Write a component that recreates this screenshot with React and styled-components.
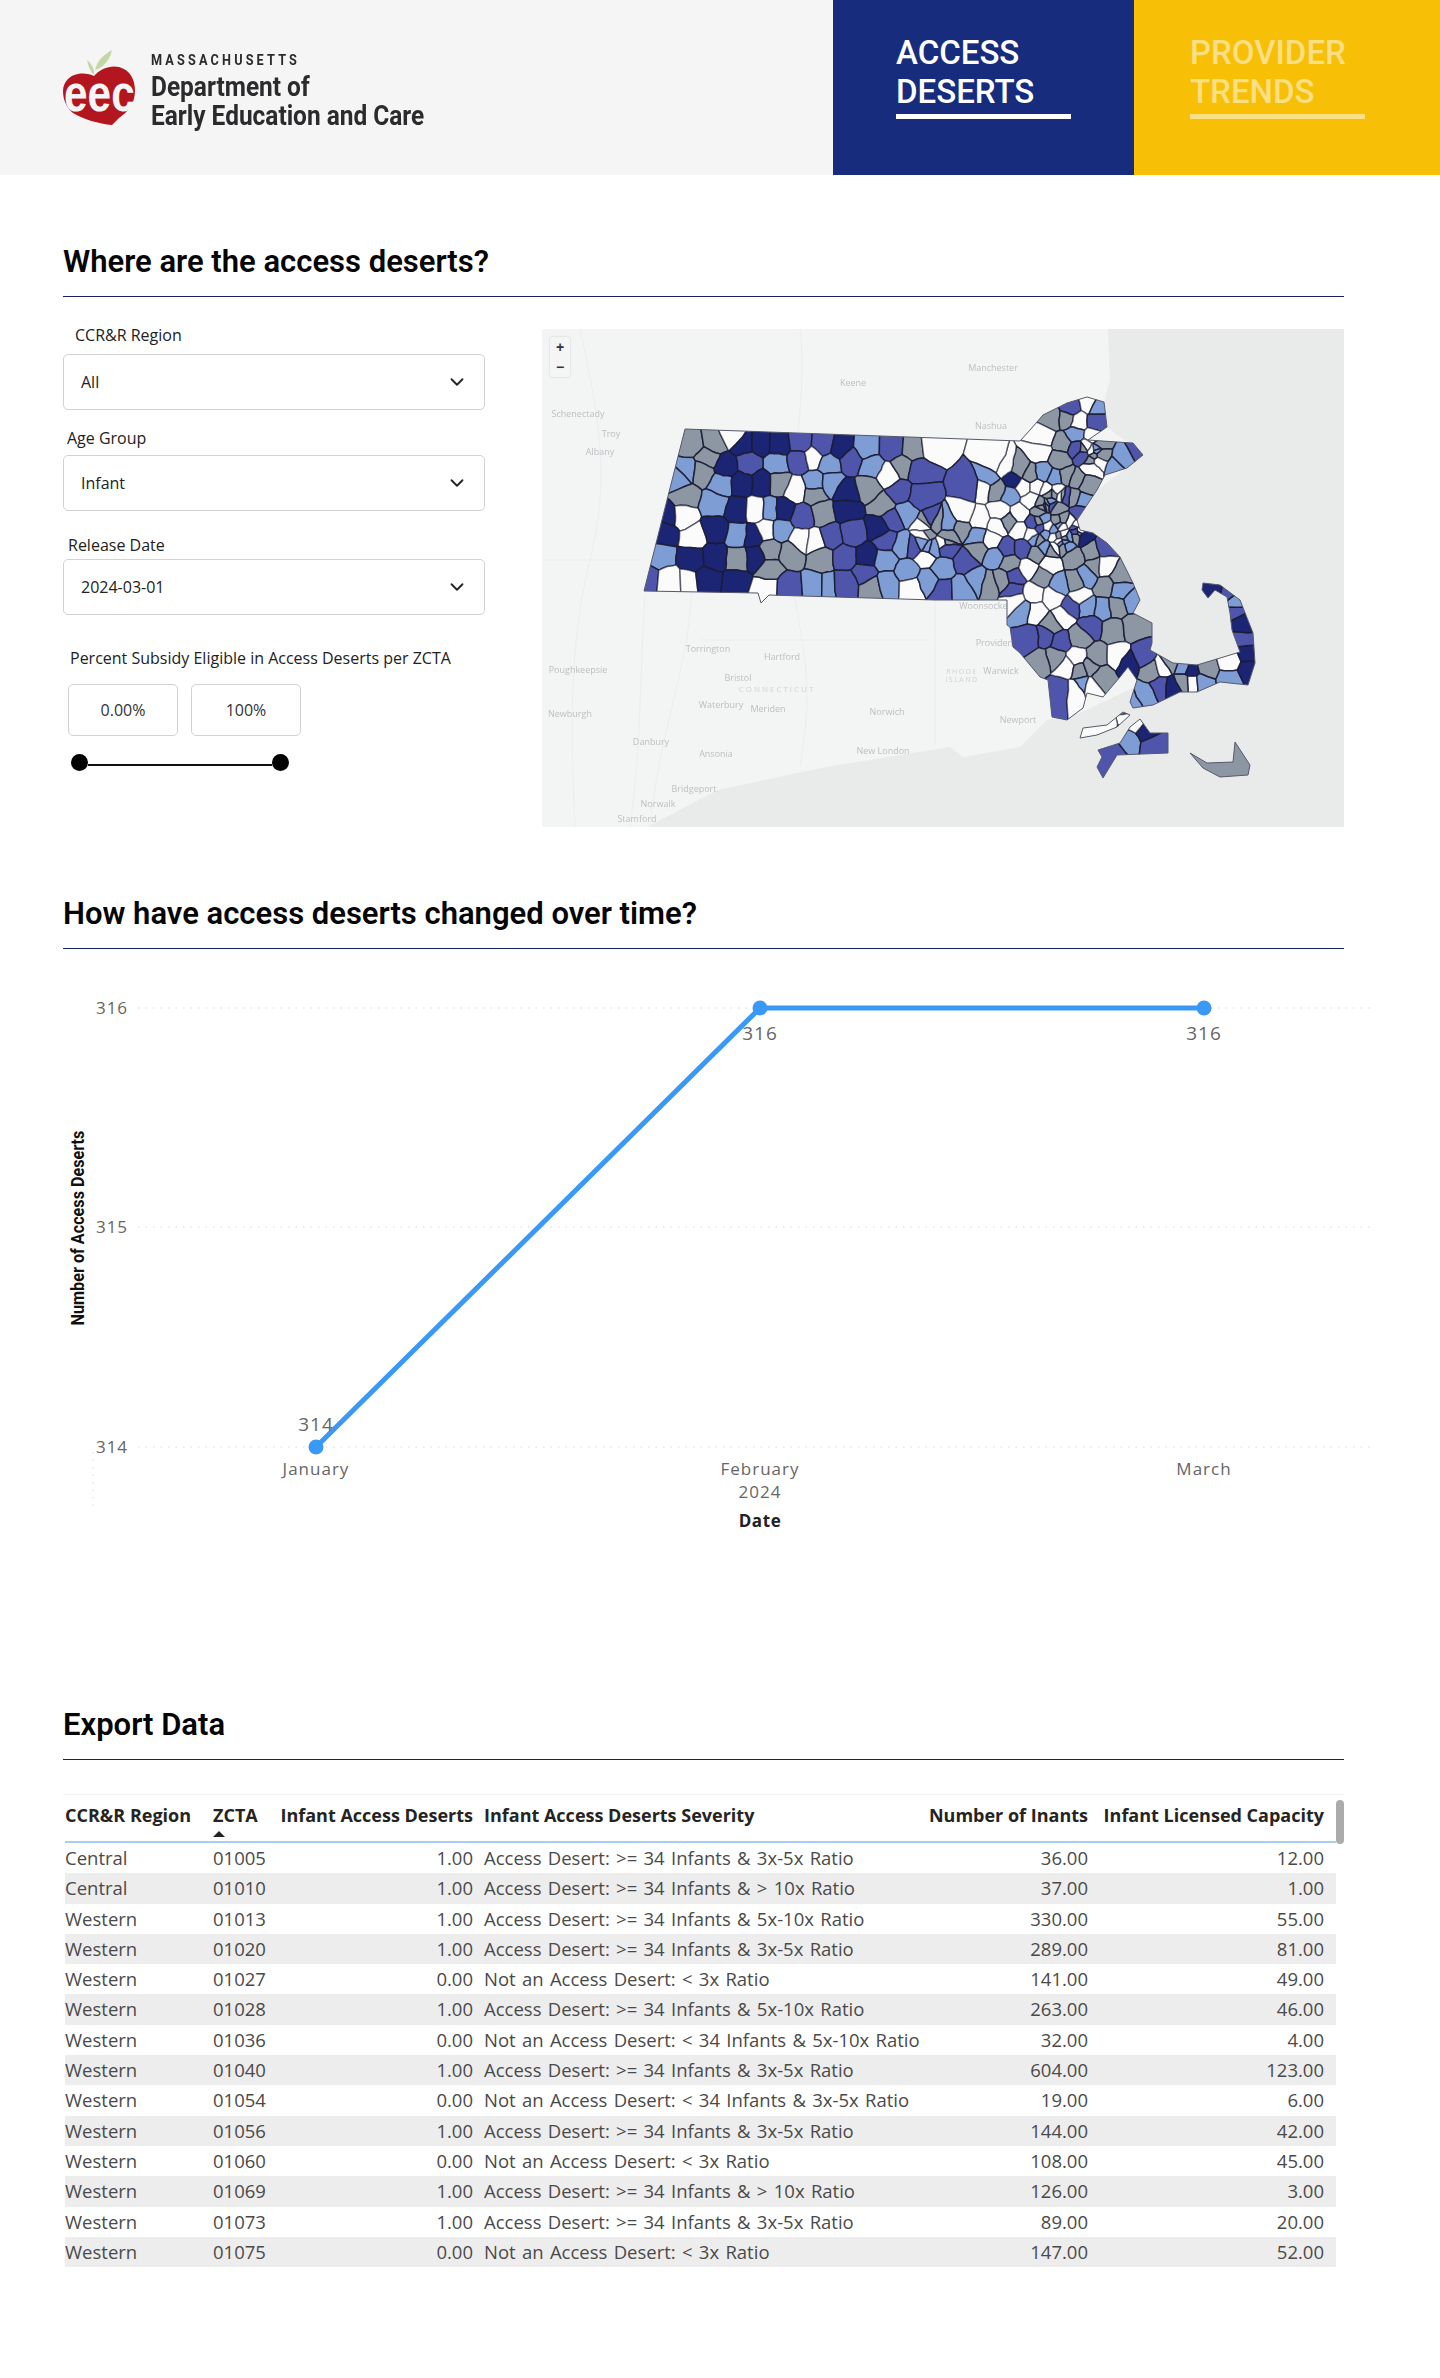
import React from "react";
import styled, { createGlobalStyle } from "styled-components";
import { ChevronDown } from "lucide-react";

const Global = createGlobalStyle`
  html, body { margin: 0; padding: 0; background: #fff; }
  * { box-sizing: border-box; }
`;

const Page = styled.div`
  width: 1440px;
  min-height: 2378px;
  font-family: "Open Sans", sans-serif;
  color: #222;
  overflow: hidden;
`;

const Header = styled.header`
  display: flex;
  height: 175px;
  background: #f5f5f5;
`;
const Brand = styled.div`
  flex: 1;
  display: flex;
  align-items: flex-start;
  padding: 49px 0 0 63px;
  gap: 16px;
`;
const BrandText = styled.div`
  display: flex;
  flex-direction: column;
  padding-top: 4px;
  color: #2b2b2d;
  transform: scaleX(0.905);
  transform-origin: left center;
`;
const BrandState = styled.div`
  font: 700 14px/14px "Roboto", sans-serif;
  letter-spacing: 3.5px;
  margin-bottom: 6px;
`;
const BrandName = styled.div`
  font: 700 27px/29px "Roboto", sans-serif;
  white-space: nowrap;
`;
const Tab = styled.div`
  width: ${(p) => p.$w}px;
  background: ${(p) => p.$bg};
  padding: 33px 0 0 ${(p) => p.$pad}px;
  color: ${(p) => p.$fg};
`;
const TabLabel = styled.div`
  width: 175px;
  font: 500 33px/39px "Roboto", sans-serif;
  padding-bottom: 3px;
  border-bottom: 5px solid currentColor;
`;

const Content = styled.main`
  padding: 0 96px 0 63px;
`;
const Heading = styled.h2`
  margin: ${(p) => p.$top}px 0 0;
  padding-bottom: 16px;
  font: 600 31px/37px "Roboto", sans-serif;
  color: #050505;
  border-bottom: 1px solid #15225f;
`;
const Row = styled.div`
  display: flex;
  align-items: flex-start;
  gap: 57px;
  padding-top: 27px;
`;
const Filters = styled.div`
  width: 422px;
  flex: none;
  display: flex;
  flex-direction: column;
`;
const Label = styled.label`
  font-size: 16px;
  line-height: 22px;
  color: #222;
  margin: ${(p) => p.$top || 0}px 0 ${(p) => p.$gap}px ${(p) => p.$indent}px;
`;
const Select = styled.div`
  height: 56px;
  display: flex;
  align-items: center;
  justify-content: space-between;
  padding: 0 16px 0 17px;
  border: 1px solid #d2d2d2;
  border-radius: 5px;
  font-size: 16px;
  color: #222;
`;
const RangeInputs = styled.div`
  display: flex;
  gap: 13px;
  margin-left: 5px;
`;
const RangeInput = styled.div`
  width: 110px;
  height: 52px;
  display: flex;
  align-items: center;
  justify-content: center;
  border: 1px solid #d2d2d2;
  border-radius: 5px;
  font-size: 16px;
  color: #333;
`;
const Slider = styled.div`
  display: flex;
  align-items: center;
  width: 218px;
  height: 17px;
  margin: 18px 0 0 8px;
`;
const Knob = styled.span`
  width: 17px;
  height: 17px;
  border-radius: 50%;
  background: #000;
  flex: none;
`;
const Track = styled.span`
  flex: 1;
  height: 2px;
  margin-top: 4px;
  background: #111;
`;

const MapFrame = styled.div`
  position: relative;
  width: 802px;
  height: 498px;
  margin-top: 5px;
  background: #e9ebeb;
  overflow: hidden;
`;
const MapSvg = styled.svg`
  display: block;
  filter: blur(0.4px);
`;
const ZoomBox = styled.div`
  position: absolute;
  left: 8px;
  top: 8px;
  width: 20px;
  height: 40px;
  background: #f5f5f5;
  border-radius: 2px;
  box-shadow: 0 0 2px rgba(0, 0, 0, 0.2);
  display: flex;
  flex-direction: column;
  font: 700 14px/20px "Liberation Sans", sans-serif;
  color: #333;
  text-align: center;
`;
const ChartSvg = styled.svg`
  display: block;
`;

const TableWrap = styled.div`
  display: flex;
  margin: 34px 0 0;
  border-top: 1px solid #f3f3f3;
  width: 1281px;
`;
const Table = styled.div`
  width: 1273px;
  padding-left: 2px;
`;
const Thumb = styled.div`
  width: 8px;
  height: 44px;
  margin-top: 5px;
  border-radius: 4px;
  background: #ababab;
`;
const grid = "142px 64px 206px 443px 172px 244px";
const HeadRow = styled.div`
  display: grid;
  grid-template-columns: ${grid};
  height: 48px;
  border-bottom: 2px solid #a9cdf2;
`;
const HeadCell = styled.div`
  position: relative;
  font: 700 18px/40px "Open Sans", sans-serif;
  color: #252423;
  white-space: nowrap;
  text-align: ${(p) => (p.$right ? "right" : "left")};
  padding: ${(p) => p.$pad};
  ${(p) =>
    p.$sorted &&
    `&::after {
      content: "";
      position: absolute;
      left: 6px;
      top: 36px;
      border-left: 6px solid transparent;
      border-right: 6px solid transparent;
      border-bottom: 6px solid #252423;
    }`}
`;
const BodyRow = styled.div`
  display: grid;
  grid-template-columns: ${grid};
  height: 30.3px;
  background: ${(p) => (p.$alt ? "#eeedee" : "#fff")};
`;
const Cell = styled.div`
  font: 400 18.5px/30px "Open Sans", sans-serif;
  word-spacing: 1.5px;
  color: #4a4a4a;
  white-space: nowrap;
  text-align: ${(p) => (p.$right ? "right" : "left")};
  padding: ${(p) => p.$pad};
`;

/* ---------- map drawing ---------- */
const z4 = `425,370,g 490,365,g 540,345,w 570,370,n 620,370,n 670,375,n 730,370,m 790,380,m 840,385,n 915,385,l 985,385,m 1045,390,g 1095,380,w
410,450,l 470,415,g 455,455,g 520,440,n 585,430,m 665,430,l 725,420,m 765,410,w 810,430,l 870,420,m 930,440,l 975,465,w 1015,440,g 1060,450,m
385,480,l 405,530,g 510,490,l 565,490,n 620,490,n 670,490,g 715,510,w 770,490,l 770,520,g 815,490,l 860,520,n 920,505,g 1005,515,m 1065,530,m
355,590,n 400,590,w 490,550,l 555,570,n 605,570,w 645,570,l 680,570,n 735,590,m 790,580,g 860,570,n 960,555,g 1025,580,l 985,600,m 1085,610,g
350,640,n 430,650,w 490,630,n 555,645,l 595,650,n 635,630,w 675,630,l 730,660,w 770,665,w 815,650,m 875,640,m 950,625,n 970,660,m 1015,675,l 1050,680,m 1080,640,g
340,710,l 425,715,n 490,710,n 555,715,g 600,710,n 645,690,g 700,700,g 790,715,g 855,710,m 915,710,n 965,720,l 1030,755,l 1080,710,w
305,780,m 360,780,w 410,790,w 470,780,n 550,790,n 640,800,w 645,750,g 690,800,m 770,800,l 810,800,l 855,790,m 910,760,m 930,800,g 970,790,l 1040,800,w 1085,780,l`;
const z5 = `450,85,m 510,70,w 530,80,l 400,115,g 440,115,g 475,125,w 530,125,m 465,165,l 520,170,w 370,170,w 430,190,g 540,190,g 470,205,m 490,225,m 360,215,w 420,240,g 540,225,g 515,260,w 610,235,l 650,215,m 590,260,l
280,300,n 300,270,g 250,260,w 225,250,w 205,295,l 190,325,w 150,320,m 230,330,g 270,345,l 310,320,w 350,320,w 380,330,w 370,280,l 405,295,l 330,285,g 440,290,g 470,300,g 500,315,g 425,345,g 460,350,g 490,360,l 395,375,m
240,395,w 300,400,w 335,360,w 235,440,w 265,425,g 300,450,w 215,480,w 175,420,w 170,470,l 130,405,w 125,445,g 85,430,l 85,470,g 260,505,m 175,510,g 225,530,l 270,550,g 310,505,m 140,545,m 65,565,l 70,630,m 125,625,l 170,600,l 210,610,g 245,600,g 285,590,m 280,630,m
325,565,w 365,590,g 390,550,w 405,500,w 350,520,g 440,495,l 460,530,g 515,510,g 550,500,m 490,470,n 530,560,g 550,560,w 600,590,g 500,590,l 555,620,g 600,630,l 640,665,l 465,605,g 420,615,l 500,680,l 455,680,m 550,685,l 590,680,g
340,640,w 400,650,w 345,695,w 430,710,w 310,690,l 285,660,w 395,735,g 480,650,w 510,740,m 480,770,g 580,750,g 640,740,g 330,775,m 375,770,m 420,785,m 405,830,g 360,840,g 530,830,g 470,835,w 595,830,w 420,930,m 440,860,w 470,930,w 480,870,g 510,860,g 545,890,g 490,915,l 510,920,w
625,850,n 670,830,m 695,870,g 730,860,w 670,945,l 725,920,m 640,960,l 760,920,n 790,860,l 745,850,g 815,905,w 790,905,g 845,905,l 815,870,n 860,865,g 930,845,w 930,895,l 985,870,n 985,820,n 980,775,m 975,730,n 950,690,m 950,675,l 880,630,n 930,640,m
580,1120,m 625,1080,l 675,1050,n 650,1030,w 700,1095,m 900,1165,g 540,1055,w`;
const parse = (s, f) =>
  s.split(/\s+/).filter(Boolean).map((t) => {
    const [x, y, c] = t.split(",");
    return f(+x, +y, c);
  });

function rng(seed) {
  let s = seed;
  return () => {
    s = (s * 1664525 + 1013904223) % 4294967296;
    return s / 4294967296;
  };
}
const hash = (k) => {
  let h = 2166136261;
  for (let i = 0; i < k.length; i++) h = Math.imul(h ^ k.charCodeAt(i), 16777619);
  return ((h >>> 0) % 1000) / 1000 - 0.5;
};
function clip(poly, a, b) {
  const mx = (a[0] + b[0]) / 2, my = (a[1] + b[1]) / 2, nx = b[0] - a[0], ny = b[1] - a[1];
  const d = (p) => (p[0] - mx) * nx + (p[1] - my) * ny;
  const out = [];
  for (let i = 0; i < poly.length; i++) {
    const p = poly[i], q = poly[(i + 1) % poly.length];
    const dp = d(p), dq = d(q);
    if (dp <= 0) out.push(p);
    if (dp < 0 !== dq < 0 && dp !== dq) {
      const t = dp / (dp - dq);
      out.push([p[0] + (q[0] - p[0]) * t, p[1] + (q[1] - p[1]) * t]);
    }
  }
  return out;
}
function jag(a, b, depth) {
  const len = Math.hypot(a[0] - b[0], a[1] - b[1]);
  if (depth === 0 || len < 6) return [];
  const ka = `${a[0].toFixed(1)},${a[1].toFixed(1)}`, kb = `${b[0].toFixed(1)},${b[1].toFixed(1)}`;
  const forward = ka < kb;
  const n = hash(forward ? ka + kb : kb + ka) * len * 0.12 * (forward ? 1 : -1);
  const m = [(a[0] + b[0]) / 2 - ((b[1] - a[1]) / len) * n, (a[1] + b[1]) / 2 + ((b[0] - a[0]) / len) * n];
  return [...jag(a, m, depth - 1), m, ...jag(m, b, depth - 1)];
}
const FILL = { n: "#1b2573", m: "#4f55ab", l: "#7f9dd5", g: "#8d96a3", w: "#fbfbfb" };

function buildCells() {
  const seeds = [
    ...parse(z4, (x, y, c) => [540 + x / 2.8, 320 + y / 3, c]),
    ...parse(z5, (x, y, c) => [920 + x / 3, 380 + y / 3, c]),
  ];
  const r = rng(11);
  const cluster = (cx, cy, sd, n, palette) => {
    for (let i = 0; i < n; i++) {
      const a = r() * 6.283, d = Math.sqrt(r()) * sd;
      seeds.push([cx + Math.cos(a) * d, cy + Math.sin(a) * d, palette[Math.floor(r() * palette.length)]]);
    }
  };
  cluster(1057, 520, 30, 46, "gggllwwm");
  cluster(933, 537, 16, 10, "gglwm");
  cluster(1090, 450, 16, 8, "gglw");
  const box = [[620, 380], [1280, 380], [1280, 790], [620, 790]];
  return seeds.map((s, i) => {
    let poly = box;
    for (let j = 0; j < seeds.length && poly.length; j++) if (j !== i) poly = clip(poly, s, seeds[j]);
    const pts = [];
    poly.forEach((p, k) => {
      const q = poly[(k + 1) % poly.length];
      pts.push(p, ...jag(p, q, 2));
    });
    return { d: "M" + pts.map((p) => `${p[0].toFixed(1)} ${p[1].toFixed(1)}`).join("L") + "Z", fill: FILL[s[2]] };
  });
}
const poly = (a) => "M" + a.map((p) => p.join(" ")).join("L") + "Z";
const MAINLAND = [[685,429],[1020,441],[1030,430],[1043,415],[1067,403],[1087,397],[1104,402],[1107,427],[1088,440],[1117,442],[1133,443],[1143,455],[1127,468],[1105,475],[1097,490],[1087,505],[1077,520],[1080,530],[1093,533],[1107,543],[1120,557],[1133,583],[1140,600],[1133,613],[1152,623],[1152,643],[1150,650],[1173,663],[1197,665],[1240,652],[1232,630],[1230,613],[1227,597],[1215,590],[1208,598],[1202,590],[1203,583],[1220,585],[1240,600],[1253,633],[1255,663],[1248,685],[1220,682],[1197,692],[1180,692],[1153,705],[1133,708],[1130,702],[1137,680],[1128,667],[1120,677],[1103,697],[1087,693],[1083,708],[1067,720],[1052,717],[1048,680],[1040,677],[1020,653],[1013,647],[1010,627],[1007,625],[1007,600],[935,600],[769,595],[761,603],[758,593],[644,591]];
const VINEYARD = [[1098,750],[1120,743],[1130,727],[1140,719],[1150,733],[1168,733],[1168,753],[1117,755],[1103,778],[1097,767],[1102,757]];
const NANTUCKET = [[1190,753],[1207,763],[1233,762],[1235,742],[1250,765],[1248,775],[1220,777],[1203,768]];
const ELIZABETH = [[1080,738],[1083,728],[1107,725],[1123,712],[1130,715],[1117,727],[1097,735]];
const STATE = [MAINLAND, VINEYARD, NANTUCKET, ELIZABETH].map(poly).join("");
const LAND = poly([[542,827],[647,827],[718,790],[826,767],[950,747],[963,757],[1020,747],[1047,720],[1080,713],[1150,680],[1150,650],[1133,613],[1107,543],[1080,530],[1077,520],[1097,490],[1127,468],[1143,455],[1107,427],[1104,402],[1110,380],[1108,329],[542,329]]);
const PLACES = [
  ["Manchester",993,371],["Keene",853,386],["Schenectady",578,417],["Troy",611,437],["Albany",600,455],["Nashua",991,429],["Torrington",708,652],["Hartford",782,660],["Bristol",738,681],["Poughkeepsie",578,673],["Waterbury",721,708],["Meriden",768,712],["Norwich",887,715],["New London",883,754],["Danbury",651,745],["Ansonia",716,757],["Bridgeport",694,792],["Norwalk",658,807],["Stamford",637,822],["Newburgh",570,717],["Providence",999,646],["Warwick",1001,674],["Woonsocket",985,609],["Newport",1018,723],
];
const CELLS = buildCells();

function MapDrawing() {
  return (
    <MapSvg width="802" height="498" viewBox="542 329 802 498">
      <defs>
        <clipPath id="ma"><path d={STATE} /></clipPath>
      </defs>
      <path d={LAND} fill="#f3f4f4" />
      <g fill="none" stroke="#ecedee" strokeWidth="1">
        <path d="M580 329C600 420 610 480 590 560S570 720 575 827" />
        <path d="M690 560C700 640 660 720 650 827" />
        <path d="M800 329C810 400 780 520 795 600S810 700 800 767" />
        <path d="M935 600V745" />
        <path d="M645 595C640 680 640 760 630 827" />
        <path d="M542 560H640M700 640H930" />
      </g>
      <g fill="#bcbfc1" fontFamily="Open Sans, sans-serif" fontSize="9">
        {PLACES.map(([t, x, y]) => (
          <text key={t} x={x} y={y} textAnchor="middle">{t}</text>
        ))}
      </g>
      <text x="777" y="692" textAnchor="middle" fill="#d0d2d4" fontFamily="Open Sans, sans-serif" fontSize="8" letterSpacing="2">CONNECTICUT</text>
      <text x="962" y="674" textAnchor="middle" fill="#d0d2d4" fontFamily="Open Sans, sans-serif" fontSize="7" letterSpacing="1.5">RHODE</text>
      <text x="962" y="682" textAnchor="middle" fill="#d0d2d4" fontFamily="Open Sans, sans-serif" fontSize="7" letterSpacing="1.5">ISLAND</text>
      <g clipPath="url(#ma)" stroke="#1a1c33" strokeWidth="1.5" strokeLinejoin="round">
        {CELLS.map((c, i) => (
          <path key={i} d={c.d} fill={c.fill} strokeOpacity={c.fill === "#fbfbfb" ? 0.6 : 0.9} />
        ))}
      </g>
      <path d={STATE} fill="none" stroke="#55586a" strokeWidth="1" />
    </MapSvg>
  );
}

function Logo() {
  return (
    <svg width="72" height="76" viewBox="63 49 72 76" aria-hidden="true">
      <path d="M112 50C105 54 97 60 95 70C103 68 110 60 112 50Z" fill="#c6d7a6" />
      <path d="M87 60C88 66 90 71 94 75C95 70 92 64 87 60Z" fill="#c6d7a6" />
      <path
        d="M94 76C100 69 110 65 119 67C130 70 135 79 135 91C135 103 128 112 119 118L112 125C99 124 83 119 73 113C66 107 63 99 63 91C63 82 70 75 78 74C84 73 90 74 94 76Z"
        fill="#b4161f"
      />
      <text transform="translate(64 111) scale(1.06 1.3)" fill="#f5f5f5" fontFamily="Liberation Sans, sans-serif" fontWeight="700" fontSize="40">eec</text>
    </svg>
  );
}

function Chart() {
  const tick = { fontFamily: "Open Sans, sans-serif", fontSize: 17, fill: "#666", letterSpacing: 1 };
  return (
    <ChartSvg width="1320" height="600" viewBox="63 949 1320 600">
      <g stroke="#e6e6e6" strokeWidth="1.5" strokeDasharray="1.5 6">
        <line x1="138" x2="1372" y1="1008" y2="1008" />
        <line x1="138" x2="1372" y1="1227" y2="1227" />
        <line x1="138" x2="1372" y1="1447" y2="1447" />
        <line x1="93" x2="93" y1="1452" y2="1510" />
      </g>
      <text x="112" y="1014" textAnchor="middle" {...tick}>316</text>
      <text x="112" y="1233" textAnchor="middle" {...tick}>315</text>
      <text x="112" y="1453" textAnchor="middle" {...tick}>314</text>
      <text transform="translate(84 1228) rotate(-90) scale(0.9 1)" textAnchor="middle" fill="#111" fontFamily="Roboto, sans-serif" fontWeight="700" fontSize="18">Number of Access Deserts</text>
      <polyline points="316,1447 760,1008 1204,1008" fill="none" stroke="#3a99f7" strokeWidth="5" />
      <circle cx="316" cy="1447" r="7.5" fill="#3a99f7" />
      <circle cx="760" cy="1008" r="7.5" fill="#3a99f7" />
      <circle cx="1204" cy="1008" r="7.5" fill="#3a99f7" />
      <text x="316" y="1431" textAnchor="middle" {...tick} fontSize="19">314</text>
      <text x="760" y="1040" textAnchor="middle" {...tick} fontSize="19">316</text>
      <text x="1204" y="1040" textAnchor="middle" {...tick} fontSize="19">316</text>
      <text x="316" y="1475" textAnchor="middle" {...tick}>January</text>
      <text x="760" y="1475" textAnchor="middle" {...tick}>February</text>
      <text x="760" y="1498" textAnchor="middle" {...tick}>2024</text>
      <text x="1204" y="1475" textAnchor="middle" {...tick}>March</text>
      <text x="760" y="1527" textAnchor="middle" fontFamily="Open Sans, sans-serif" fontSize="17" fontWeight="700" fill="#222" letterSpacing="0.6">Date</text>
    </ChartSvg>
  );
}

const A = (s) => `Access Desert: >= 34 Infants & ${s}`;
const ROWS = [
  ["Central","01005","1.00",A("3x-5x Ratio"),"36.00","12.00"],
  ["Central","01010","1.00",A("> 10x Ratio"),"37.00","1.00"],
  ["Western","01013","1.00",A("5x-10x Ratio"),"330.00","55.00"],
  ["Western","01020","1.00",A("3x-5x Ratio"),"289.00","81.00"],
  ["Western","01027","0.00","Not an Access Desert: < 3x Ratio","141.00","49.00"],
  ["Western","01028","1.00",A("5x-10x Ratio"),"263.00","46.00"],
  ["Western","01036","0.00","Not an Access Desert: < 34 Infants & 5x-10x Ratio","32.00","4.00"],
  ["Western","01040","1.00",A("3x-5x Ratio"),"604.00","123.00"],
  ["Western","01054","0.00","Not an Access Desert: < 34 Infants & 3x-5x Ratio","19.00","6.00"],
  ["Western","01056","1.00",A("3x-5x Ratio"),"144.00","42.00"],
  ["Western","01060","0.00","Not an Access Desert: < 3x Ratio","108.00","45.00"],
  ["Western","01069","1.00",A("> 10x Ratio"),"126.00","3.00"],
  ["Western","01073","1.00",A("3x-5x Ratio"),"89.00","20.00"],
  ["Western","01075","0.00","Not an Access Desert: < 3x Ratio","147.00","52.00"],
];
const PADS = ["0", "0 0 0 6px", "0 4px 0 0", "0 0 0 7px", "0 4px 0 0", "0 12px 0 0"];
const RIGHT = [false, false, true, false, true, true];
const HEADS = ["CCR&R Region", "ZCTA", "Infant Access Deserts", "Infant Access Deserts Severity", "Number of Inants", "Infant Licensed Capacity"];

export default function App() {
  const chevron = <ChevronDown size={22} color="#222" />;
  return (
    <Page>
      <Global />
      <Header>
        <Brand>
          <Logo />
          <BrandText>
            <BrandState>MASSACHUSETTS</BrandState>
            <BrandName>Department of</BrandName>
            <BrandName>Early Education and Care</BrandName>
          </BrandText>
        </Brand>
        <Tab $w={301} $pad={63} $bg="#172c7d" $fg="#fff">
          <TabLabel>ACCESS DESERTS</TabLabel>
        </Tab>
        <Tab $w={306} $pad={56} $bg="#f7c006" $fg="rgba(255,255,255,0.5)">
          <TabLabel>PROVIDER TRENDS</TabLabel>
        </Tab>
      </Header>
      <Content>
        <Heading $top={68}>Where are the access deserts?</Heading>
        <Row>
          <Filters>
            <Label $indent={12} $gap={8}>CCR&amp;R Region</Label>
            <Select>All{chevron}</Select>
            <Label $indent={4} $top={17} $gap={6}>Age Group</Label>
            <Select>Infant{chevron}</Select>
            <Label $indent={5} $top={23} $gap={3}>Release Date</Label>
            <Select>2024-03-01{chevron}</Select>
            <Label $indent={7} $top={32} $gap={15}>Percent Subsidy Eligible in Access Deserts per ZCTA</Label>
            <RangeInputs>
              <RangeInput>0.00%</RangeInput>
              <RangeInput>100%</RangeInput>
            </RangeInputs>
            <Slider><Knob /><Track /><Knob /></Slider>
          </Filters>
          <MapFrame>
            <MapDrawing />
            <ZoomBox><span>+</span><span>−</span></ZoomBox>
          </MapFrame>
        </Row>
        <Heading $top={68}>How have access deserts changed over time?</Heading>
        <Chart />
        <Heading $top={157}>Export Data</Heading>
        <TableWrap>
          <Table>
            <HeadRow>
              {HEADS.map((h, i) => (
                <HeadCell key={h} $right={RIGHT[i]} $pad={PADS[i]} $sorted={i === 1}>{h}</HeadCell>
              ))}
            </HeadRow>
            {ROWS.map((r, n) => (
              <BodyRow key={r[1]} $alt={n % 2 === 1}>
                {r.map((v, i) => (
                  <Cell key={i} $right={RIGHT[i]} $pad={PADS[i]}>{v}</Cell>
                ))}
              </BodyRow>
            ))}
          </Table>
          <Thumb />
        </TableWrap>
      </Content>
    </Page>
  );
}
